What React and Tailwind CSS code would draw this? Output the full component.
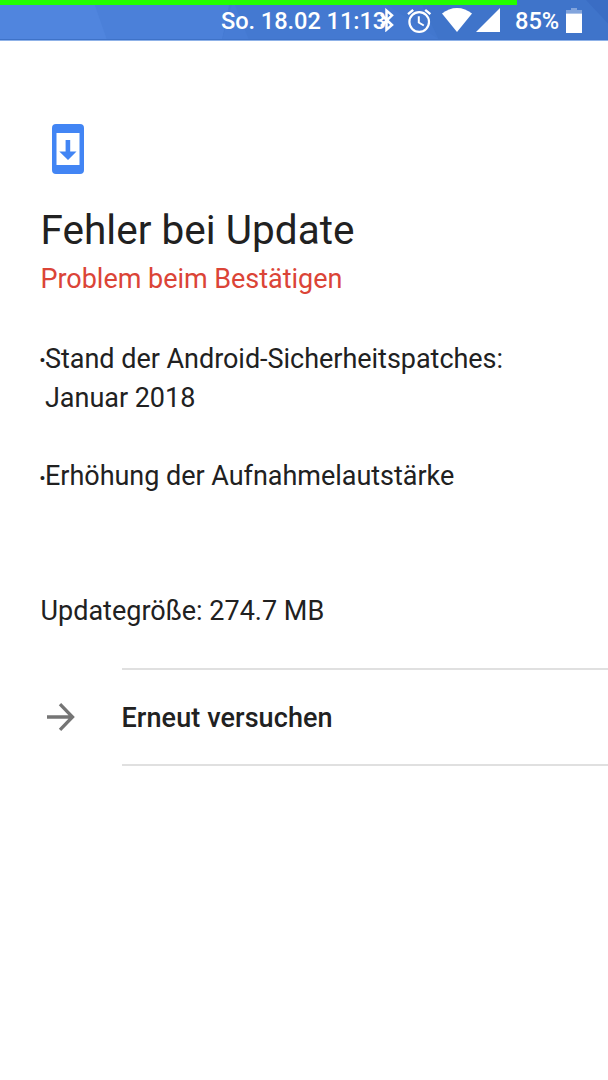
function StatusBar() {
  return (
    <header className="relative h-[41px] overflow-hidden border-b border-[#8fb2e8] bg-[#4479d1] font-medium text-white">
      <svg className="absolute inset-0 h-full w-full" viewBox="0 0 608 41" preserveAspectRatio="none">
        <path d="M0 0H230L222 41H0z" fill="#4b80d9" />
        <path d="M0 0H93L107 41H0z" fill="#5085de" />
        <path d="M233 0L249 41H222z" fill="#477cd5" />
        <path d="M380 0H608V41H440z" fill="#4277ce" />
        <path d="M420 0H608V41H439z" fill="#3f74ca" />
        <path d="M586 0H608V24z" fill="#3a6dc4" />
        <path d="M0 40H608V41H0z" fill="#3e72c8" />
      </svg>
      <div className="relative h-[5px] w-[517px] bg-[#22ff00]" />
      <div className="relative flex h-[33px] items-start pl-[221px] pt-[3px] text-[23.6px]">
        <span className="-mt-[3px] w-[159px] whitespace-nowrap leading-[33px] tracking-[-0.06px]">So. 18.02 11:13</span>
        <svg className="h-6 w-[14px] shrink-0" viewBox="0 0 14 24" fill="none" stroke="currentColor" strokeWidth="2.5">
          <path d="M1 6.500L12 17L6.500 21.700V2.600L12 7.300L1 18" />
        </svg>
        <svg className="ml-[13px] -mt-[1.500px] h-[26px] w-[26px] shrink-0" viewBox="0 0 26 26" fill="none" stroke="currentColor" strokeWidth="2.2">
          <circle cx="12.200" cy="15" r="9.800" />
          <path d="M11.800 9.200V15.500L16.800 18.500" strokeWidth="2" />
          <path d="M1 7.200L6.200 2.900M18.200 2.900L23.400 7.200" strokeWidth="2.4" />
        </svg>
        <svg className="ml-[9px] h-6 w-[30px] shrink-0" viewBox="0 0 30 24" fill="currentColor">
          <path d="M15 24L0 5.500C4.500 2 9.400 0 15 0S25.500 2 30 5.500z" />
        </svg>
        <svg className="ml-[4px] h-6 w-6 shrink-0" viewBox="0 0 24 24" fill="currentColor">
          <path d="M0 24H24V0z" />
        </svg>
        <span className="ml-[15px] -mt-[3px] w-[51px] leading-[33px]">85%</span>
        <svg className="h-[25px] w-4 shrink-0" viewBox="0 0 16 25" fill="currentColor">
          <path d="M5 0H11V2H16V5.500H0V2H5z" opacity="0.35" />
          <path d="M0 5.500H16V25H0z" />
        </svg>
      </div>
    </header>
  );
}

function UpdateIcon() {
  return (
    <svg className="ml-[11px] h-[50px] w-8" viewBox="0 0 32 50" fill="#4285f4">
      <path fillRule="evenodd" d="M4 0H28a4 4 0 0 1 4 4V46a4 4 0 0 1-4 4H4a4 4 0 0 1-4-4V4a4 4 0 0 1 4-4zM4.500 9V41H27.500V9z" />
      <path d="M13.600 16H18.200V27.500H24.500L16 36L7.300 27.500H13.600z" />
    </svg>
  );
}

export default function App() {
  return (
    <div className="min-h-[1080px] w-full bg-white font-['Roboto',sans-serif] text-[27px] leading-[38.8px] text-[#212121]">
      <StatusBar />
      <main className="pt-[82.500px]">
        <section className="px-[40.500px]">
          <UpdateIcon />
          <h1 className="mt-[32px] text-[40.500px] leading-[48px] tracking-[0.03px]">Fehler bei Update</h1>
          <p className="mt-[6px] tracking-[-0.03px] text-[#db4437]">Problem beim Bestätigen</p>
          <ul className="mt-[41.500px] flex flex-col gap-[39.500px] tracking-[-0.03px]">
            <li className="flex">
              <span className="flex w-[4px] justify-center text-[19px] leading-[41px]">•</span>
              <span className="ml-[0.500px]">
                Stand der Android-Sicherheitspatches:
                <br />
                Januar 2018
              </span>
            </li>
            <li className="flex h-[39px]">
              <span className="flex w-[4px] justify-center text-[19px] leading-[43px]">•</span>
              <span className="ml-[0.500px]">Erhöhung der Aufnahmelautstärke</span>
            </li>
          </ul>
          <p className="mt-[96px]">Updategröße: 274.7 MB</p>
        </section>
        <section className="mt-[37.500px] flex items-center">
          <div className="w-[121.500px] pl-[47px]">
            <svg className="h-7 w-7" viewBox="0 0 28 28" fill="none" stroke="#757575" strokeWidth="3.3">
              <path d="M0 14H25M13 1.200L25.500 14L13 26.800" />
            </svg>
          </div>
          <button className="h-[98px] flex-1 border-y-2 border-[#e0e0e0] pt-[2px] text-left font-medium tracking-[0.09px]">Erneut versuchen</button>
        </section>
      </main>
    </div>
  );
}
